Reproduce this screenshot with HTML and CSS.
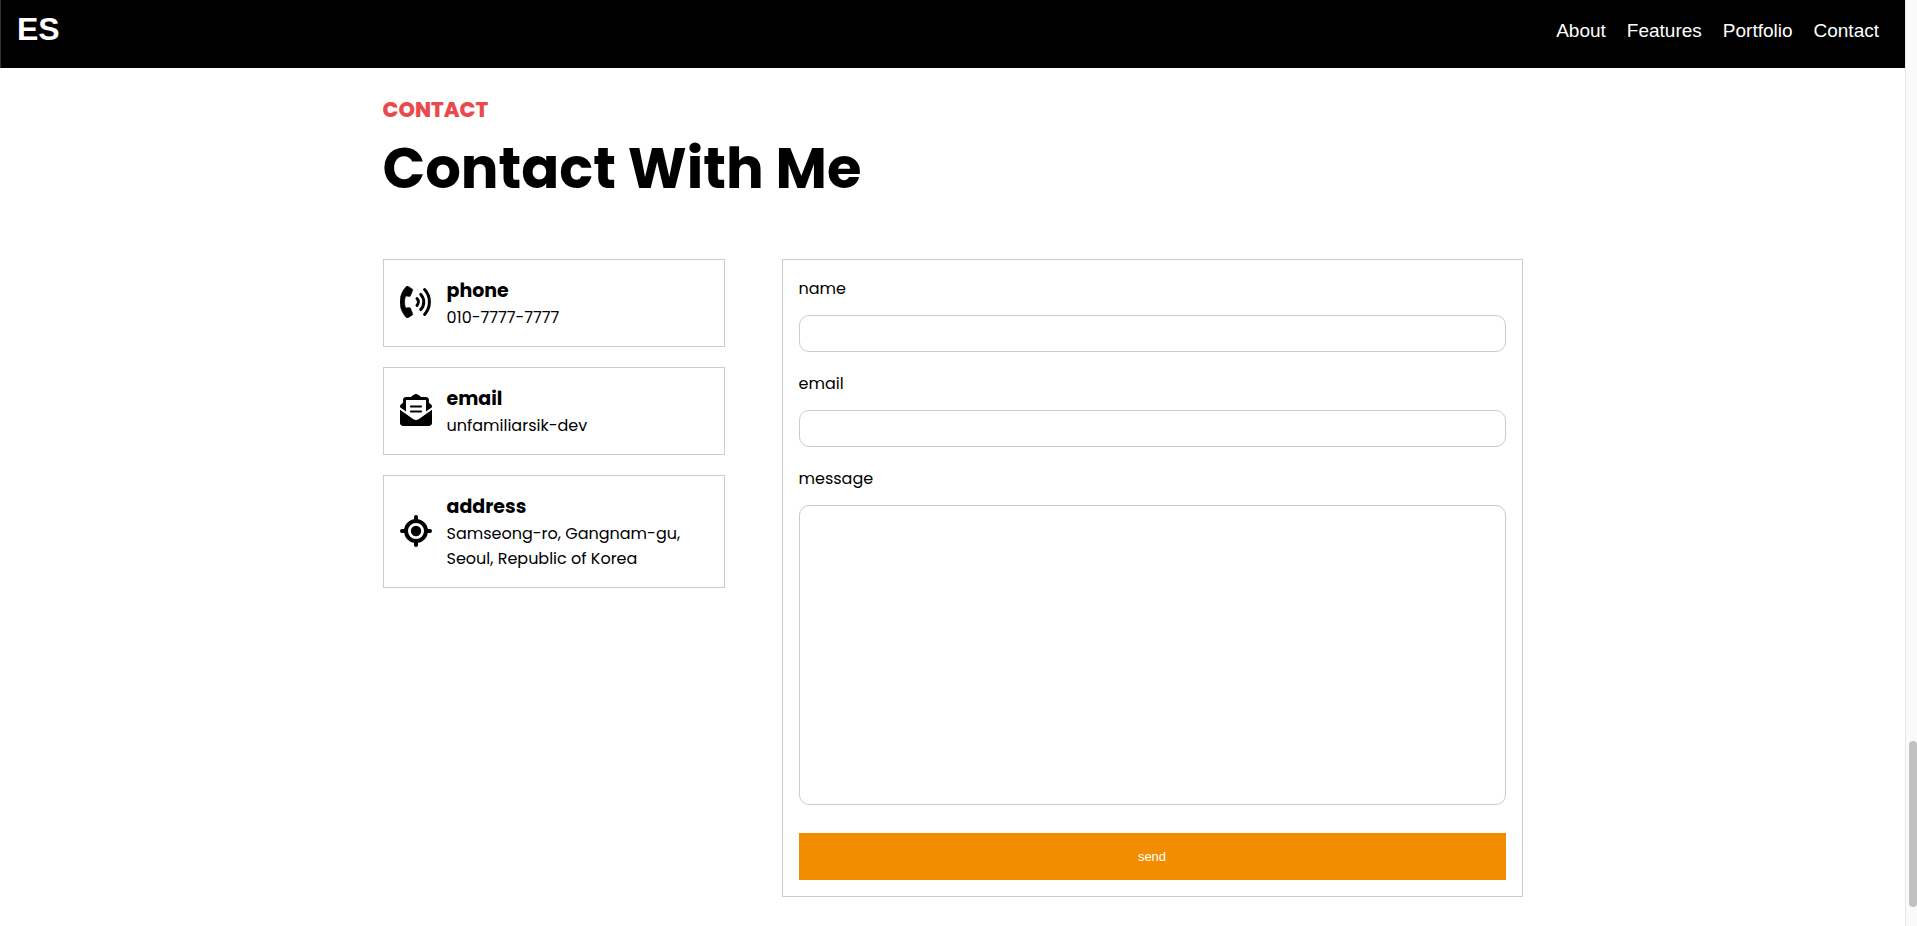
FILE: index.html
```html
<!DOCTYPE html>
<html lang="en">
<head>
  <meta charset="UTF-8" />
  <meta name="viewport" content="width=device-width, initial-scale=1" />
  <title>ES - Contact</title>
  <link rel="stylesheet" href="styles.css">
</head>
<body>
  <div class="page">
    <!-- HEADER -->
    <header class="header">
      <h1 class="logo">ES</h1>
      <nav class="nav">
        <a href="#about">About</a>
        <a href="#features">Features</a>
        <a href="#portfolio">Portfolio</a>
        <a href="#contact">Contact</a>
      </nav>
    </header>

    <!-- CONTACT -->
    <main id="contact" class="contact">
      <p class="eyebrow">CONTACT</p>
      <h2 class="title">Contact With Me</h2>

      <div class="content">
        <div class="cards">
          <div class="card">
            <svg class="icon" viewBox="0 0 32 32" aria-hidden="true">
              <path class="handset" transform="scale(.0667) translate(0 -32)" d="M97.333 506.966c-129.874-129.874-129.681-340.252 0-469.933 5.698-5.698 14.527-6.632 21.263-2.422l64.817 40.513a17.187 17.187 0 0 1 6.849 20.958l-32.408 81.021a17.188 17.188 0 0 1-17.669 10.719l-55.81-5.58c-21.051 58.261-20.612 122.471 0 179.515l55.811-5.581a17.188 17.188 0 0 1 17.669 10.719l32.408 81.022a17.188 17.188 0 0 1-6.849 20.958l-64.817 40.513a17.19 17.19 0 0 1-21.264-2.422z"/>
              <path class="wave" d="M17 12.6a5 5 0 0 1 0 6.8M20.8 8.4a11.2 11.2 0 0 1 0 15.2M24.6 3.6a18.4 18.4 0 0 1 0 24.8"/>
            </svg>
            <div>
              <h3>phone</h3>
              <p>010-7777-7777</p>
            </div>
          </div>

          <div class="card">
            <svg class="icon" viewBox="0 0 512 512" aria-hidden="true">
              <path d="M176 216h160c8.84 0 16-7.16 16-16s-7.16-16-16-16H176c-8.84 0-16 7.16-16 16s7.16 16 16 16zm-16 64c0 8.84 7.16 16 16 16h160c8.84 0 16-7.16 16-16s-7.16-16-16-16H176c-8.84 0-16 7.16-16 16zm96 137.13c-16.42 0-32.84-5.06-46.86-15.19L0 250.86V464c0 26.51 21.49 48 48 48h416c26.51 0 48-21.49 48-48V250.86L302.86 401.94c-14.02 10.12-30.44 15.19-46.86 15.19zm237.61-254.18c-8.85-6.94-17.24-13.47-29.61-22.81V96c0-26.51-21.49-48-48-48h-77.55c-3.04-2.2-5.87-4.26-9.04-6.56C312.6 29.17 279.2-.35 256 0c-23.2-.35-56.59 29.17-73.41 41.44-3.17 2.3-6 4.36-9.04 6.56H96c-26.51 0-48 21.49-48 48v44.14c-12.37 9.33-20.76 15.87-29.61 22.81A47.995 47.995 0 0 0 0 200.72v10.65l96 69.35V96h320v184.72l96-69.35v-10.65c0-14.74-6.78-28.67-18.39-37.77z"/>
            </svg>
            <div>
              <h3>email</h3>
              <p>unfamiliarsik-dev</p>
            </div>
          </div>

          <div class="card">
            <svg class="icon" viewBox="0 0 32 32" aria-hidden="true">
              <circle class="ring" cx="16" cy="16" r="10"/>
              <circle cx="16" cy="16" r="5.2"/>
              <path class="tick" d="M16 2v3M16 27v3M2 16h3M27 16h3"/>
            </svg>
            <div>
              <h3>address</h3>
              <p>Samseong-ro, Gangnam-gu,<br>Seoul, Republic of Korea</p>
            </div>
          </div>
        </div>

        <form class="form">
          <label for="name">name</label>
          <input type="text" id="name" />

          <label for="email">email</label>
          <input type="email" id="email" />

          <label for="message">message</label>
          <textarea id="message"></textarea>

          <button type="submit">send</button>
        </form>
      </div>
    </main>
  </div>

  <div class="scrollbar">
    <div class="thumb"></div>
  </div>
</body>
</html>
```

FILE: styles.css
```css
* {
  margin: 0;
  padding: 0;
  box-sizing: border-box;
}
body {
  display: flex;
  min-height: 100vh;
  font-family: Poppins, Inter, sans-serif;
  font-size: 16px;
  line-height: 25px;
  color: #000;
  background: #fff;
}
.page {
  flex: 1;
}
.header {
  display: flex;
  justify-content: space-between;
  height: 68px;
  padding: 11px 26px 0 16px;
  background: #000;
  border-left: 1px solid #333;
  font-family: Arial, "Liberation Sans", sans-serif;
  color: #fff;
}
.logo {
  font-size: 32px;
  line-height: 37px;
}
.nav {
  display: flex;
  gap: 21px;
  font-size: 19px;
  line-height: 39px;
}
.nav a {
  color: #fff;
  text-decoration: none;
}
.contact {
  max-width: 1140px;
  margin: 0 auto;
  padding: 25px 0 28px;
}
.eyebrow {
  font-size: 21px;
  font-weight: 800;
  line-height: 34px;
  color: #eb4a4c;
}
.title {
  font-size: 56px;
  font-weight: 700;
  line-height: 84px;
  margin-bottom: 48px;
}
.content {
  display: grid;
  grid-template-columns: 30% 65%;
  justify-content: space-between;
  align-items: start;
}
.cards {
  display: grid;
  gap: 20px;
}
.card {
  display: flex;
  align-items: center;
  gap: 15px;
  padding: 16px;
  border: 1px solid #ccc;
}
.card h3 {
  font-size: 19px;
  line-height: 29px;
}
.icon {
  flex: none;
  width: 32px;
  height: 32px;
  margin-bottom: 2px;
}
.handset {
  stroke: #000;
  stroke-width: 8;
}
.wave, .ring, .tick {
  fill: none;
  stroke: #000;
  stroke-linecap: round;
}
.wave {
  stroke-width: 3;
}
.ring, .tick {
  stroke-width: 4;
}
.form {
  display: flex;
  flex-direction: column;
  padding: 16px;
  border: 1px solid #ccc;
}
.form label {
  margin-bottom: 14px;
}
.form input, .form textarea {
  width: 100%;
  padding: 10px;
  border: 1px solid #ccc;
  border-radius: 10px;
  background: #fff;
  font-size: 13px;
}
.form input {
  height: 37px;
  margin-bottom: 19px;
}
.form textarea {
  height: 300px;
  margin-bottom: 28px;
  resize: none;
}
.form button {
  height: 47px;
  border: none;
  background: #f38d00;
  color: #fff;
  font-family: Arial, "Liberation Sans", sans-serif;
  font-size: 13px;
  cursor: pointer;
}
.scrollbar {
  display: flex;
  flex-direction: column;
  justify-content: flex-end;
  width: 12px;
  padding: 0 0 19px 3px;
  background: #fafafa;
  border-left: 1px solid #e8e8e8;
}
.thumb {
  height: 166px;
  border-radius: 4px;
  background: #c1c1c1;
}
```
